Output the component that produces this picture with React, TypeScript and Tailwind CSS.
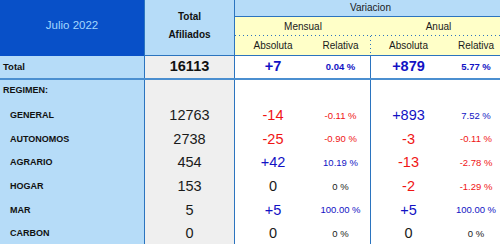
import React from 'react';

interface Row {
  name: string;
  total: string;
  ma: string;
  mr: string;
  aa: string;
  ar: string;
}

const rows: Row[] = [
  { name: 'GENERAL', total: '12763', ma: '-14', mr: '-0.11 %', aa: '+893', ar: '7.52 %' },
  { name: 'AUTONOMOS', total: '2738', ma: '-25', mr: '-0.90 %', aa: '-3', ar: '-0.11 %' },
  { name: 'AGRARIO', total: '454', ma: '+42', mr: '10.19 %', aa: '-13', ar: '-2.78 %' },
  { name: 'HOGAR', total: '153', ma: '0', mr: '0 %', aa: '-2', ar: '-1.29 %' },
  { name: 'MAR', total: '5', ma: '+5', mr: '100.00 %', aa: '+5', ar: '100.00 %' },
  { name: 'CARBON', total: '0', ma: '0', mr: '0 %', aa: '0', ar: '0 %' },
];

// sign decides colour: negative red, positive blue, zero dark
const tone = (v: string) => {
  if (v.startsWith('-')) return 'text-[#f01414]';
  if (v.startsWith('0')) return 'text-[#1a1a1a]';
  return 'text-[#1212c4]';
};

const cols = 'grid grid-cols-[145px_90px_76px_60px_75px_60px]';
const line = 'border-[#2b74bf]';

const HDots = () => (
  <div className="h-px w-full bg-[repeating-linear-gradient(90deg,#2b74bf_0_1px,transparent_1px_4px)]" />
);

export default function App() {
  return (
    <div className="w-[500px] h-[244px] overflow-hidden bg-white font-['Liberation_Sans',Arial,sans-serif]">
      <div className="w-[506px]">
        {/* header */}
        <div className={`${cols} grid-rows-[17px_19px_20px]`}>
          <div className={`row-span-3 bg-[#0850c8] border-r ${line} flex items-center justify-center pb-[5px] text-[11.5px] text-[#a4d8ff]`}>
            Julio 2022
          </div>
          <div className={`row-span-3 bg-[#b6dcf8] border-r border-b ${line} flex flex-col items-center justify-center pb-[3px] text-[10px] font-bold leading-[18px] text-[#111]`}>
            <span>Total</span>
            <span>Afiliados</span>
          </div>
          <div className={`col-span-4 bg-[#b6dcf8] border-b ${line} flex items-center justify-center pb-[2px] text-[10px] text-[#1a1a1a]`}>
            Variacion
          </div>
          <div className="col-span-2 bg-[#ffffc8] flex flex-col">
            <div className="flex-1 flex items-center justify-center text-[10px] text-[#1a1a1a]">Mensual</div>
            <HDots />
          </div>
          <div className="col-span-2 bg-[#ffffc8] flex flex-col">
            <div className="flex-1 flex items-center justify-center text-[10px] text-[#1a1a1a]">Anual</div>
            <HDots />
          </div>
          <div className={`bg-[#ffffc8] border-b ${line} flex items-center justify-center text-[10px] text-[#1a1a1a]`}>Absoluta</div>
          <div className={`bg-[#ffffc8] border-b ${line} flex`}>
            <div className="flex-1 flex items-center justify-center text-[10px] text-[#1a1a1a]">Relativa</div>
            <div className="w-px h-full bg-[repeating-linear-gradient(180deg,#2b74bf_0_1px,transparent_1px_4px)]" />
          </div>
          <div className={`bg-[#ffffc8] border-b ${line} flex items-center justify-center text-[10px] text-[#1a1a1a]`}>Absoluta</div>
          <div className={`bg-[#ffffc8] border-b ${line} flex items-center justify-center text-[10px] text-[#1a1a1a]`}>Relativa</div>
        </div>

        {/* total row */}
        <div className={`${cols} h-[24px] border-b-2 border-[#4b8fd0]`}>
          <div className={`bg-[#b6dcf8] border-r ${line} flex items-center pl-[3px] text-[9.5px] font-bold text-[#111]`}>Total</div>
          <div className={`bg-[#efefef] border-r ${line} flex items-center justify-center text-[14.5px] font-bold text-[#111]`}>16113</div>
          <div className="flex items-center justify-center text-[14.5px] font-bold text-[#1212c4]">+7</div>
          <div className={`border-r ${line} flex items-center justify-center text-[9.5px] font-bold text-[#1212c4]`}>0.04 %</div>
          <div className="flex items-center justify-center text-[14.5px] font-bold text-[#1212c4]">+879</div>
          <div className="flex items-center justify-center text-[9.5px] font-bold text-[#1212c4]">5.77 %</div>
        </div>

        {/* regimen label row */}
        <div className={`${cols} h-[24px]`}>
          <div className={`bg-[#b6dcf8] border-r ${line} flex items-center pb-[2px] pl-[3px] text-[9px] font-bold text-[#111]`}>REGIMEN:</div>
          <div className={`bg-[#efefef] border-r ${line}`} />
          <div />
          <div className={`border-r ${line}`} />
          <div />
          <div />
        </div>

        {rows.map((r) => (
          <div key={r.name} className={`${cols} h-[23.66px]`}>
            <div className={`bg-[#b6dcf8] border-r ${line} flex items-center pl-[10px] text-[9px] font-bold text-[#111]`}>{r.name}</div>
            <div className={`bg-[#efefef] border-r ${line} flex items-center justify-center text-[14.5px] text-[#1a1a1a]`}>{r.total}</div>
            <div className={`flex items-center justify-center text-[14.5px] ${tone(r.ma)}`}>{r.ma}</div>
            <div className={`border-r ${line} flex items-center justify-center text-[9.5px] ${tone(r.mr)}`}>{r.mr}</div>
            <div className={`flex items-center justify-center text-[14.5px] ${tone(r.aa)}`}>{r.aa}</div>
            <div className={`flex items-center justify-center text-[9.5px] ${tone(r.ar)}`}>{r.ar}</div>
          </div>
        ))}
      </div>
    </div>
  );
}
